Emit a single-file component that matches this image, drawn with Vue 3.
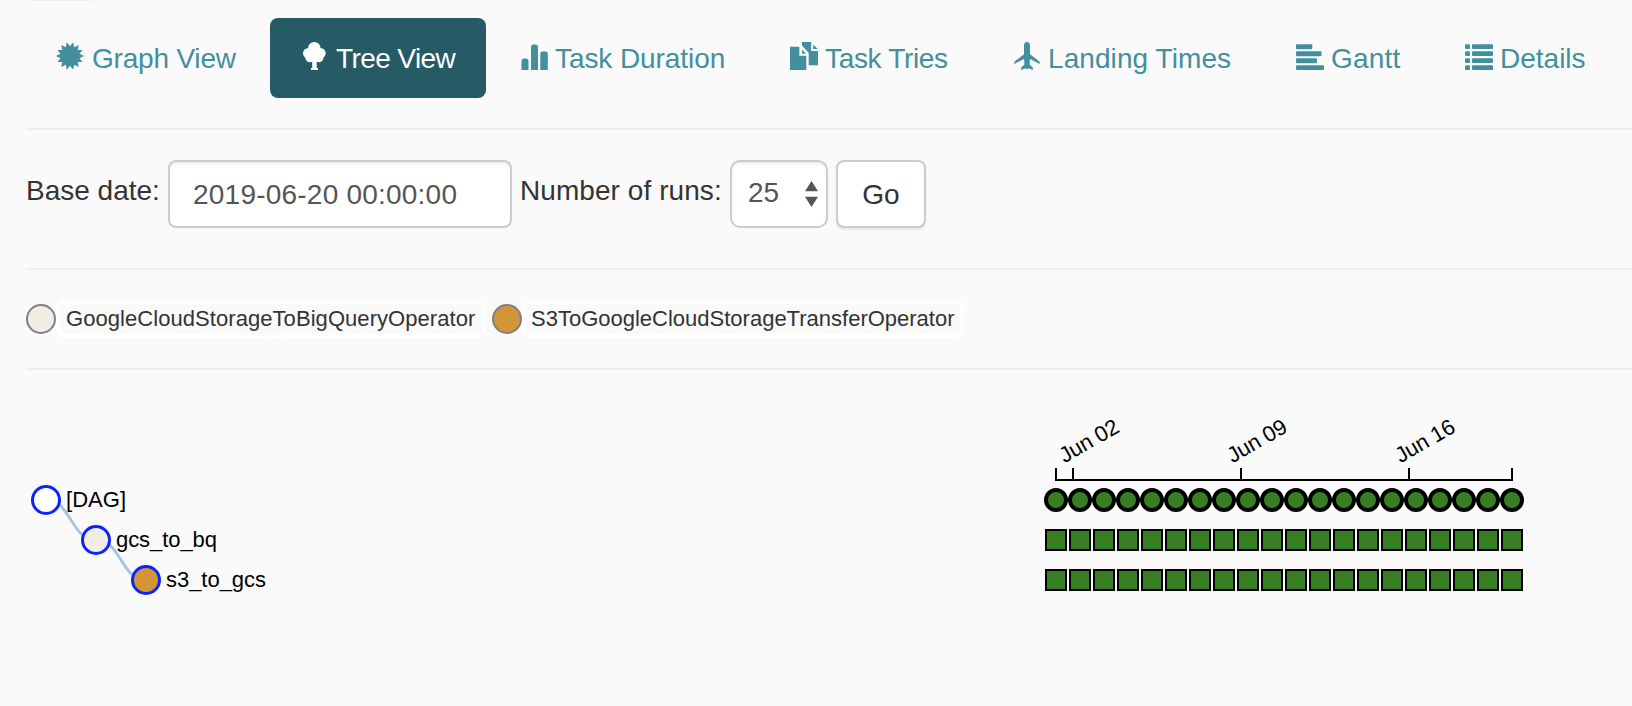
<script setup>
const tabs = [
  { id: 'graph', label: 'Graph View' },
  { id: 'tree', label: 'Tree View', active: true },
  { id: 'duration', label: 'Task Duration' },
  { id: 'tries', label: 'Task Tries' },
  { id: 'landing', label: 'Landing Times' },
  { id: 'gantt', label: 'Gantt' },
  { id: 'details', label: 'Details' },
]
const star = Array.from({ length: 28 }, (_, i) => {
  const r = i % 2 ? 9.8 : 14
  const a = ((i + 1) * Math.PI) / 14
  return `${(14 + r * Math.sin(a)).toFixed(2)},${(14 - r * Math.cos(a)).toFixed(2)}`
}).join(' ')
const operators = [
  { id: 'gcs', name: 'GoogleCloudStorageToBigQueryOperator' },
  { id: 's3', name: 'S3ToGoogleCloudStorageTransferOperator' },
]
const nodes = [
  { x: 46, y: 500, label: '[DAG]', fill: '#fff', len: 60 },
  { x: 96, y: 540, label: 'gcs_to_bq', fill: '#f0ede4', len: 101 },
  { x: 146, y: 580, label: 's3_to_gcs', fill: '#d39637', len: 100 },
]
const runs = Array.from({ length: 20 }, (_, i) => 1056 + i * 24)
const ticks = [
  { x: 1073, label: 'Jun 02' },
  { x: 1241, label: 'Jun 09' },
  { x: 1409, label: 'Jun 16' },
]
</script>

<template>
  <main class="page">
    <div class="sliver"></div>
    <nav class="tabs">
      <a v-for="t in tabs" :key="t.id" class="tab" :class="[t.id, { active: t.active }]">
        <svg class="icon" viewBox="0 0 28 28" width="28" height="28" fill="currentColor">
          <polygon v-if="t.id === 'graph'" :points="star" />
          <g v-else-if="t.id === 'tree'">
            <circle cx="14.300" cy="6.200" r="6.200" />
            <circle cx="8.400" cy="11.300" r="5.400" /><circle cx="20.300" cy="11.300" r="5.400" />
            <circle cx="9.800" cy="15.800" r="4.400" /><circle cx="19" cy="15.800" r="4.400" />
            <path d="M9 7h11v11.500h-3.300V26H18v2h-7v-2h1.200v-7.500H9z" />
          </g>
          <path v-else-if="t.id === 'duration'" d="M1.500 28V19a2.500 2.500 0 0 1 2.500-2.500h2A2.500 2.500 0 0 1 8.500 19v9zM11 28V5a2.500 2.500 0 0 1 2.500-2.500h2A2.500 2.500 0 0 1 18 5v23zM20.300 28V12a2.500 2.500 0 0 1 2.500-2.500h2.500a2.500 2.500 0 0 1 2.500 2.500v16z" />
          <path v-else-if="t.id === 'tries'" d="M0 4.700h9.300v9h7V28H0zM12 7.500l4 4.200h-4zM12 0h9.200v9H28v14.300h-9.300V11L12 3.500zM23.200 2.500l4.600 4.500h-4.600z" />
          <path v-else-if="t.id === 'landing'" d="M14 0c2 0 3 1.500 3 3.300V12.300L25.800 19c.9.700 1 1.500 1 3L17 17l-.5 5.500L19.800 25.500V28L15.600 26.300 14 27.200 12.400 26.300 8.200 28V25.500L11.500 22.500 11 17 1.200 22c0-1.500.1-2.300 1-3L11 12.300V3.300C11 1.500 12 0 14 0z" />
          <g v-else-if="t.id === 'gantt'">
            <rect y="2.300" width="16.300" height="5" rx="1" /><rect y="9.300" width="25.500" height="5" rx="1" />
            <rect y="16.300" width="21" height="5" rx="1" /><rect y="23.300" width="28" height="4.700" rx="1" />
          </g>
          <g v-else>
            <template v-for="y in [2.3, 9.3, 16.3, 23.3]" :key="y">
              <rect :y="y" width="5" height="4.800" rx="1.300" /><rect x="7" :y="y" width="21" height="4.800" rx="1" />
            </template>
          </g>
        </svg>
        <span>{{ t.label }}</span>
      </a>
    </nav>
    <form class="controls" @submit.prevent>
      <label class="lab-date">Base date:</label>
      <div class="field date">2019-06-20 00:00:00</div>
      <label class="lab-runs">Number of runs:</label>
      <div class="field select">
        <span>25</span>
        <svg width="13" height="26" viewBox="0 0 13 26" fill="#555"><path d="M6.500 0 13 10.300H0zM0 15.700h13L6.500 26z" /></svg>
      </div>
      <button class="go" type="button">Go</button>
    </form>
    <section class="legend">
      <div v-for="o in operators" :key="o.id" class="op" :class="o.id">
        <i class="dot"></i><span class="name">{{ o.name }}</span>
      </div>
    </section>
    <svg class="chart" width="1632" height="336" viewBox="0 370 1632 336">
      <g fill="none" stroke="#a8c5dd" stroke-width="3">
        <path d="M46 500C71 500 71 540 96 540" /><path d="M96 540C121 540 121 580 146 580" />
      </g>
      <g v-for="n in nodes" :key="n.label">
        <circle :cx="n.x" :cy="n.y" r="13.500" :fill="n.fill" stroke="#0b24fb" stroke-width="3" />
        <text :x="n.x + 20" :y="n.y + 7" :textLength="n.len">{{ n.label }}</text>
      </g>
      <path d="M1056 468V480H1512V468" fill="none" stroke="#000" stroke-width="2" />
      <g v-for="t in ticks" :key="t.x">
        <path :d="`M${t.x} 468V480`" stroke="#000" stroke-width="2" />
        <text :transform="`translate(${t.x - 8.5} 463.5) rotate(-30)`" textLength="65">{{ t.label }}</text>
      </g>
      <g fill="#377e22" stroke="#000">
        <template v-for="x in runs" :key="x">
          <circle :cx="x" cy="500" r="10" stroke-width="4" />
          <rect :x="x - 10" y="530" width="20" height="20" stroke-width="2" />
          <rect :x="x - 10" y="570" width="20" height="20" stroke-width="2" />
        </template>
      </g>
    </svg>
  </main>
</template>

<style>
html, body { margin: 0; background: #fafafa; overflow: hidden; }
</style>
<style scoped>
* { box-sizing: border-box; }
.page { position: relative; width: 1632px; height: 706px; overflow: hidden; background: #fafafa; color: #333; font: 28px/40px "Liberation Sans", Arial, sans-serif; }
.sliver { position: absolute; left: 30px; top: 0; width: 62px; height: 1px; background: #efefef; }
.tabs { display: flex; gap: 4px; height: 130px; margin-left: 26px; padding-top: 18px; border-bottom: 2px solid #eee; }
.tab { display: flex; flex: none; height: 80px; padding: 20px 0 20px 30px; color: #438f9e; border-radius: 8px; white-space: nowrap; }
.tab span { margin-left: 7px; line-height: 42px; }
.icon { flex: none; margin-top: 4px; }
.active { background: #265b65; color: #fff; }
.graph { width: 240px; letter-spacing: -.2px; }
.tree { width: 216px; letter-spacing: -.6px; }
.tab.graph span, .tab.tree span { margin-left: 8px; }
.duration { width: 266px; letter-spacing: -.08px; }
.tries { width: 219px; letter-spacing: -.33px; }
.landing { width: 279px; letter-spacing: .08px; }
.gantt { width: 165px; letter-spacing: .2px; }
.details { width: 190px; }
.controls { display: flex; height: 140px; margin-left: 26px; padding-top: 30px; border-bottom: 2px solid #eee; }
.controls label { line-height: 62px; white-space: nowrap; }
.lab-date { width: 142px; }
.controls .lab-runs { width: 218px; padding-left: 8px; letter-spacing: .07px; }
.field { height: 68px; border: 2px solid #ccc; border-radius: 8px; background: #fff; color: #555; box-shadow: inset 0 2px 2px rgba(0,0,0,.075); line-height: 66px; white-space: nowrap; }
.date { width: 344px; padding-left: 23px; letter-spacing: .22px; }
.select { display: flex; width: 98px; padding-left: 16px; border-radius: 10px; line-height: 62px; }
.select svg { margin: 19px 0 0 26px; }
.go { width: 90px; height: 68px; margin-left: 8px; padding: 0; border: 2px solid #ccc; border-radius: 8px; background: #fff; color: #333; font: inherit; line-height: 66px; box-shadow: 0 2px 2px rgba(0,0,0,.075); }
.legend { display: flex; gap: 6px; height: 100px; margin-left: 26px; padding-top: 30px; border-bottom: 2px solid #eee; }
.op { display: flex; font-size: 22px; }
.dot { width: 30px; height: 30px; margin-top: 4px; border: 2px solid #808080; border-radius: 50%; background: #f0ede4; }
.s3 .dot { background: #d39637; }
.name { width: 430px; height: 38px; padding-left: 6px; border: 4px solid #fff; border-radius: 9px; line-height: 29px; letter-spacing: .06px; white-space: nowrap; }
.s3 .name { width: 442px; padding-left: 5px; letter-spacing: 0; }
.chart { display: block; font-size: 22px; }
.chart text { fill: #000; }
</style>
